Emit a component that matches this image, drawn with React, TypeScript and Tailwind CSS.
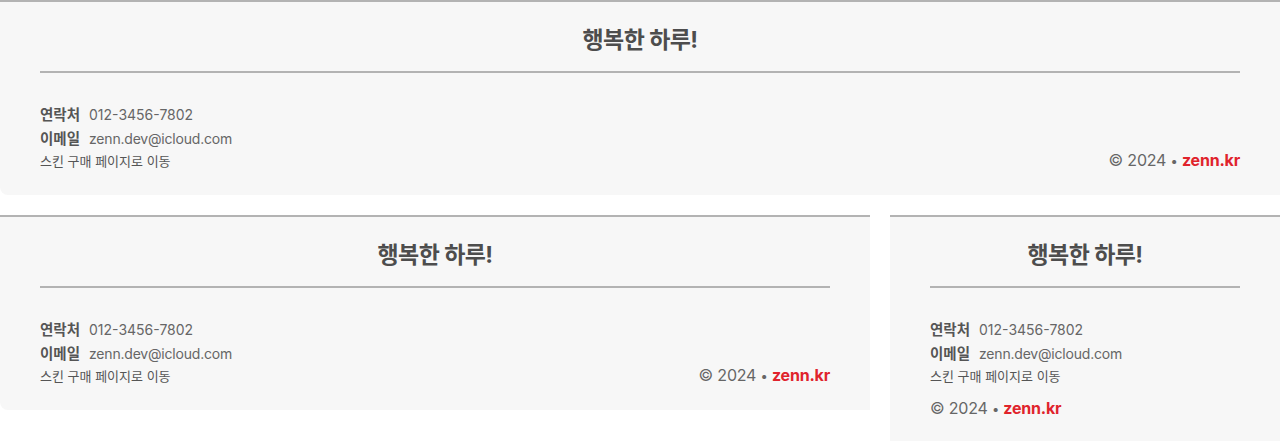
const font = { fontFamily: '"Inter", "Noto Sans CJK KR", sans-serif' };

const Footer = ({ className = "", stacked = false }: { className?: string; stacked?: boolean }) => {
  return (
    <footer className={`bg-[#f7f7f7] border-t-2 border-[#b3b3b3] px-10 pt-[22px] pb-6 ${className}`}>
      <h2 className="text-center text-[23px] leading-8 font-bold text-[#4d4d4d] tracking-tight">
        행복한 하루!
      </h2>
      <div className="mt-[15px] h-[2px] bg-[#b3b3b3]" />
      <div className={stacked ? "mt-[30px]" : "mt-[30px] flex items-end justify-between"}>
        <div>
          <div className="flex items-center gap-[9px] h-6">
            <span className="text-[14.5px] font-bold text-[#555]">연락처</span>
            <span className="text-sm text-[#666]">012-3456-7802</span>
          </div>
          <div className="flex items-center gap-[9px] h-6">
            <span className="text-[14.5px] font-bold text-[#555]">이메일</span>
            <span className="text-sm text-[#666] tracking-[-0.2px]">zenn.dev@icloud.com</span>
          </div>
          <a href="#" className="block text-[13px] leading-5 text-[#555]">
            스킨 구매 페이지로 이동
          </a>
        </div>
        <p className={`text-base leading-[22px] text-[#666] tracking-[-0.2px] ${stacked ? "mt-[11px]" : "-mb-px"}`}>
          © 2024 <span className="text-[13px]">•</span> <a href="#" className="font-bold text-[#e0232c]">zenn.kr</a>
        </p>
      </div>
    </footer>
  );
};

export default function App() {
  return (
    <div className="w-[1280px] h-[441px] overflow-hidden bg-white" style={font}>
      <Footer className="rounded-bl-lg" />
      <div className="mt-5 flex items-start gap-5">
        <Footer className="w-[870px] rounded-bl-lg" />
        <Footer className="w-[390px]" stacked />
      </div>
    </div>
  );
}
